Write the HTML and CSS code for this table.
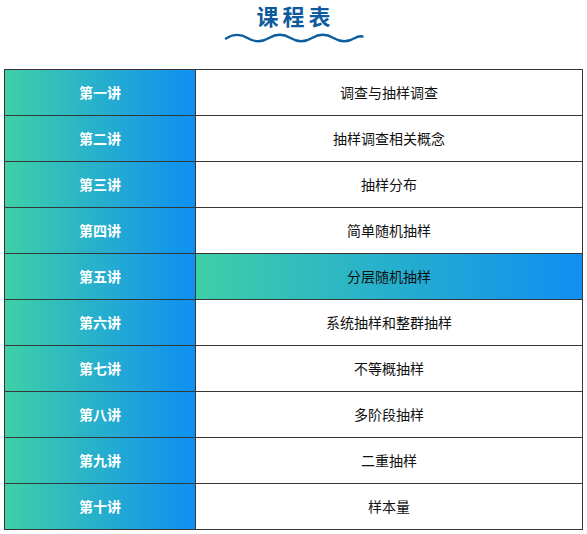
FILE: index.html
```html
<!DOCTYPE html>
<html lang="zh">
<head>
<meta charset="utf-8">
<title>课程表</title>
<link rel="stylesheet" href="styles.css">
</head>
<body>
<header class="header">
  <h1 class="title">课程表</h1>
  <svg class="wave" width="140" height="12" viewBox="0 0 140 12" aria-hidden="true">
    <path d="M2 6.5 Q12.75 -0.5 23.5 6 Q34.25 12.5 45 6 Q55.75 -0.5 66.5 6 Q77.25 12.5 88 6 Q98.75 -0.5 109.5 6 Q120.25 12.5 131 6 Q135 3.5 138.5 4.5" fill="none" stroke="#0d5e9e" stroke-width="2.4" stroke-linecap="round"/>
  </svg>
</header>
<main class="schedule">
  <div class="cell lesson">第一讲</div><div class="cell topic">调查与抽样调查</div>
  <div class="cell lesson">第二讲</div><div class="cell topic">抽样调查相关概念</div>
  <div class="cell lesson">第三讲</div><div class="cell topic">抽样分布</div>
  <div class="cell lesson">第四讲</div><div class="cell topic">简单随机抽样</div>
  <div class="cell lesson">第五讲</div><div class="cell topic active">分层随机抽样</div>
  <div class="cell lesson">第六讲</div><div class="cell topic">系统抽样和整群抽样</div>
  <div class="cell lesson">第七讲</div><div class="cell topic">不等概抽样</div>
  <div class="cell lesson">第八讲</div><div class="cell topic">多阶段抽样</div>
  <div class="cell lesson">第九讲</div><div class="cell topic">二重抽样</div>
  <div class="cell lesson">第十讲</div><div class="cell topic">样本量</div>
</main>
</body>
</html>
```
FILE: styles.css
```css
* { box-sizing: border-box; }
html, body { margin: 0; padding: 0; background: #fff; }
body {
  font-family: "Noto Sans CJK SC", "Noto Sans", sans-serif;
  width: 587px;
}
.header {
  padding-top: 4px;
  text-align: center;
}
.title {
  margin: 0;
  font-size: 22px;
  line-height: 22px;
  font-weight: 700;
  letter-spacing: 4px;
  color: #0e5a9c;
  padding-left: 4px;
}
.wave {
  display: block;
  margin: 6px 0 0 224px;
}
.schedule {
  display: grid;
  grid-template-columns: 191px 387px;
  width: 579px;
  margin: 25px 0 0 4px;
  border-left: 1px solid #363636;
  border-top: 1px solid #363636;
}
.cell {
  height: 46px;
  padding-bottom: 2px;
  border-right: 1px solid #363636;
  border-bottom: 1px solid #363636;
  display: flex;
  align-items: center;
  justify-content: center;
  font-size: 14px;
  line-height: 1;
}
.lesson {
  background: linear-gradient(to right, #3ecfa8, #0f8ff2);
  color: #fff;
  font-weight: 700;
}
.topic {
  color: #111;
  font-weight: 400;
}
.topic.active {
  background: linear-gradient(to right, #3ecfa8, #0f8ff2);
}
```
